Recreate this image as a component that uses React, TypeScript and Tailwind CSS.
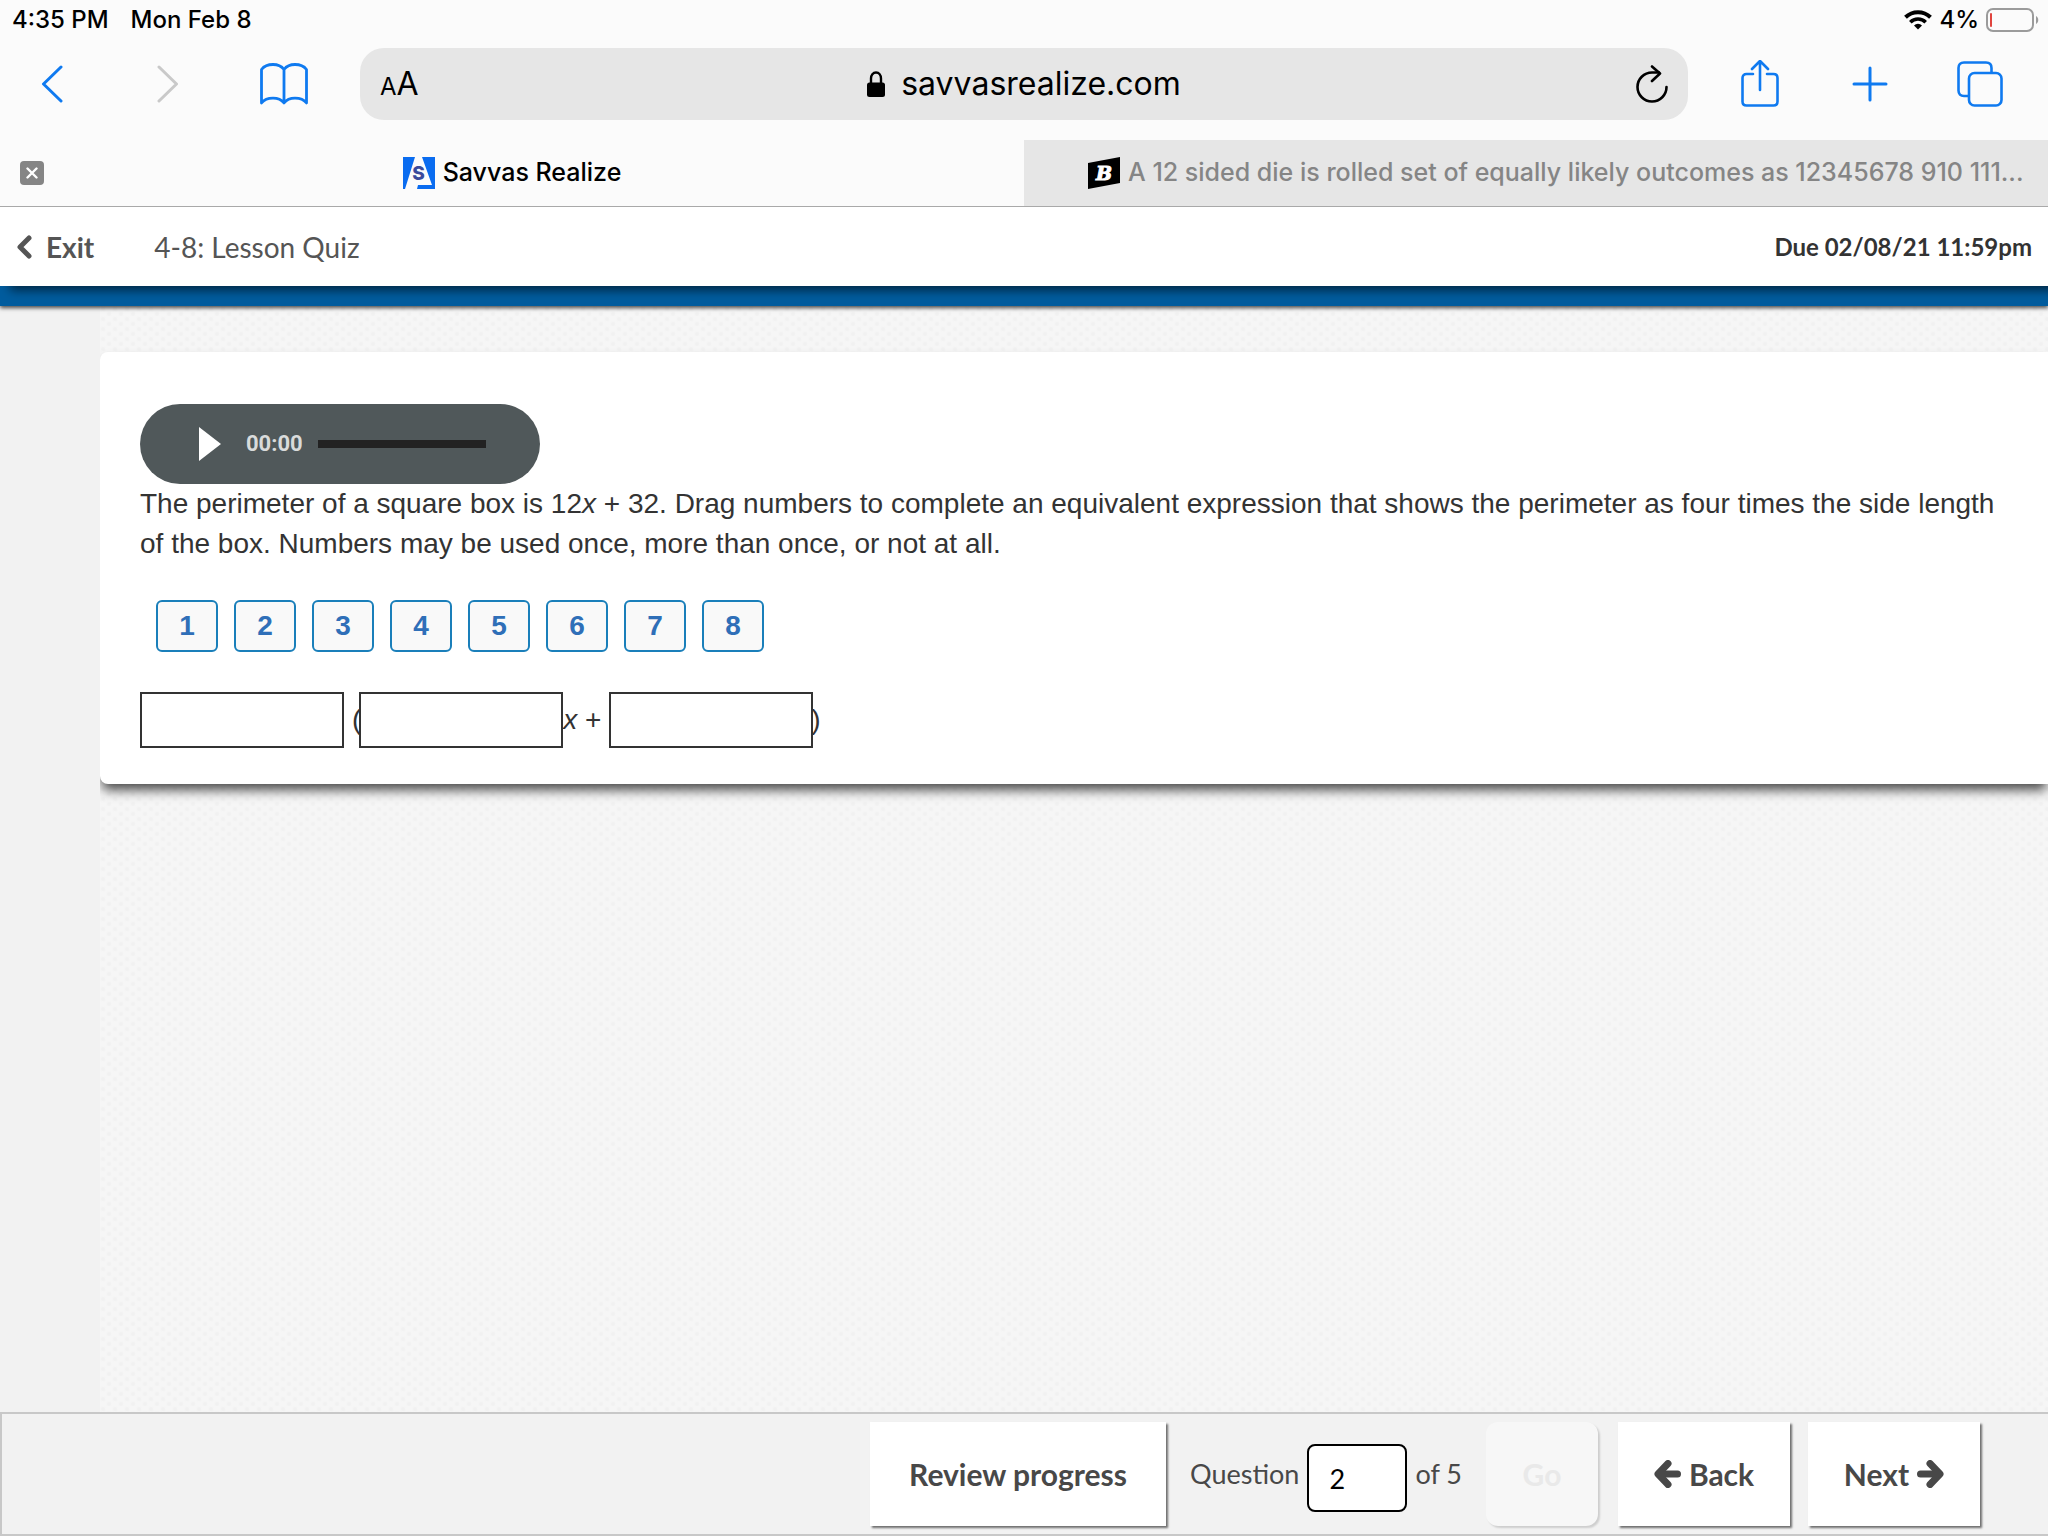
import { useState } from "react";
import type { ReactNode } from "react";

const NUMBERS = ["1", "2", "3", "4", "5", "6", "7", "8"];
const TOTAL_QUESTIONS = 5;

const WifiIcon = () => (
  <svg width="28" height="20" viewBox="0 0 28 20" fill="none" stroke="#000" aria-hidden="true">
    <path d="M1.5 7.2a18 18 0 0 1 25 0" strokeWidth="4" />
    <path d="M6.3 12.2a11 11 0 0 1 15.4 0" strokeWidth="3.6" />
    <path d="M14 19.6l-4-4.2a5.7 5.7 0 0 1 8 0z" fill="#000" stroke="none" />
  </svg>
);

const BatteryIcon = () => (
  <svg width="54" height="24" viewBox="0 0 54 24" fill="none" aria-hidden="true">
    <rect x="1" y="1" width="46" height="22" rx="6" stroke="#9b9b9b" strokeWidth="2" />
    <path d="M50 8c3 1.400 3 6.600 0 8z" fill="#9b9b9b" />
    <rect x="4" y="5" width="2" height="14" rx="1" fill="#e0443e" />
  </svg>
);

const BackIcon = () => (
  <svg width="22" height="38" viewBox="0 0 22 38" fill="none" stroke="#0f7af0" strokeWidth="3" strokeLinecap="round" strokeLinejoin="round" aria-hidden="true">
    <path d="M20 2L2.500 19 20 36" />
  </svg>
);

const ForwardIcon = () => (
  <svg width="22" height="38" viewBox="0 0 22 38" fill="none" stroke="#c9c9c9" strokeWidth="3" strokeLinecap="round" strokeLinejoin="round" aria-hidden="true">
    <path d="M2 2l17.500 17L2 36" />
  </svg>
);

const BookIcon = () => (
  <svg width="48" height="42" viewBox="0 0 48 42" fill="none" stroke="#0f7af0" strokeWidth="2.800" strokeLinejoin="round" aria-hidden="true">
    <path d="M24 6.500C21.500 3.200 17.500 1.500 13 1.500S4 3.200 1.500 6.500V40c2.500-3.200 7-4.800 11.500-4.800S21.500 36.800 24 40c2.500-3.200 6.500-4.800 11-4.800s9 1.600 11.500 4.800V6.500C44 3.200 39.500 1.500 35 1.500S26.500 3.200 24 6.500zM24 6.500V40" />
  </svg>
);

const LockIcon = () => (
  <svg width="18" height="26" viewBox="0 0 18 26" aria-hidden="true">
    <path d="M4 13V7.500C4 4 6 1.500 9 1.500s5 2.500 5 6V13" fill="none" stroke="#000" strokeWidth="2.400" />
    <rect y="11.500" width="18" height="14.500" rx="2.500" />
  </svg>
);

const ReloadIcon = () => (
  <svg width="32" height="38" viewBox="0 0 32 38" fill="none" stroke="#000" strokeWidth="2.600" strokeLinecap="round" strokeLinejoin="round" aria-hidden="true">
    <path d="M30.500 22A14.500 14.500 0 1 1 16 7.500h7" />
    <path d="M16 1.500l8 7-8 7.500" />
  </svg>
);

const ShareIcon = () => (
  <svg width="38" height="48" viewBox="0 0 38 48" fill="none" stroke="#0f7af0" strokeWidth="2.600" strokeLinecap="round" strokeLinejoin="round" aria-hidden="true">
    <path d="M12 14H5.500C3 14 1.500 15.500 1.500 18v23.500c0 2.500 1.500 4 4 4h27c2.500 0 4-1.500 4-4V18c0-2.500-1.500-4-4-4H26" />
    <path d="M19 30V1.500M11 9l8-8 8 8" />
  </svg>
);

const PlusIcon = () => (
  <svg width="36" height="36" viewBox="0 0 36 36" stroke="#0f7af0" strokeWidth="3" strokeLinecap="round" aria-hidden="true">
    <path d="M18 2v32M2 18h32" />
  </svg>
);

const TabsIcon = () => (
  <svg width="46" height="46" viewBox="0 0 46 46" fill="none" stroke="#0f7af0" strokeWidth="2.600" aria-hidden="true">
    <path d="M12 35H7c-3.500 0-5.500-2-5.500-5.500V7C1.500 3.500 3.500 1.500 7 1.500h22c3.500 0 5.500 2 5.500 5.500v5" />
    <rect x="12" y="12" width="32.500" height="32.500" rx="5.500" />
  </svg>
);

const SavvasLogo = () => (
  <svg width="32" height="32" viewBox="0 0 32 32" aria-hidden="true">
    <path d="M0 0h12L2 32H0z" fill="#0a6cf0" />
    <path d="M19 0h13v32H14l1-4h14z" fill="#0a6cf0" />
    <text x="15.500" y="23" textAnchor="middle" fontFamily="Inter, sans-serif" fontSize="19" fontWeight="800" fill="#3a4a9c">S</text>
  </svg>
);

const BartlebyLogo = () => (
  <svg width="32" height="32" viewBox="0 0 32 32" aria-hidden="true">
    <path d="M0 6L32 0v26L0 32z" />
    <text x="16" y="23" textAnchor="middle" fontFamily="DejaVu Serif, serif" fontSize="19" fontWeight="700" fontStyle="italic" fill="#fff" stroke="#fff">B</text>
  </svg>
);

const ChevronIcon = () => (
  <svg width="16" height="24" viewBox="0 0 16 24" fill="none" stroke="#555" strokeWidth="5" strokeLinecap="round" strokeLinejoin="round" aria-hidden="true">
    <path d="M13 3L4 12l9 9" />
  </svg>
);

const ArrowIcon = ({ className = "" }: { className?: string }) => (
  <svg className={className} width="27" height="28" viewBox="0 0 27 28" fill="none" stroke="#484848" strokeLinecap="round" strokeLinejoin="round" aria-hidden="true">
    <path d="M14 3.500L4 14l10 10.500" strokeWidth="7" />
    <path d="M6 14h17.500" strokeWidth="7" />
  </svg>
);

const ToolButton = ({ label, children }: { label: string; children: ReactNode }) => (
  <button aria-label={label} className="flex w-12 items-center justify-center">
    {children}
  </button>
);

const DropBox = ({ label }: { label: string }) => {
  const [value, setValue] = useState("");

  return (
    <span
      role="group"
      aria-label={label}
      onDragOver={(e) => e.preventDefault()}
      onDrop={(e) => setValue(e.dataTransfer.getData("text"))}
      className="flex h-14 w-51 items-center justify-center border-2 border-[#333] bg-white"
    >
      {value}
    </span>
  );
};

const BrowserChrome = () => (
  <div className="relative z-20 border-b border-[#a9a9a9] bg-[#fbfbfb] font-['Inter',sans-serif] text-black">
    <div className="flex h-10 items-center justify-between pr-2 pl-3 text-2xl font-medium">
      <div className="flex gap-[22px]">
        <span>4:35 PM</span>
        <span>Mon Feb 8</span>
      </div>
      <div className="flex items-center gap-[7px]">
        <WifiIcon />
        <span>4%</span>
        <BatteryIcon />
      </div>
    </div>

    <div className="flex h-25 items-center pb-3">
      <div className="flex w-90 items-center justify-between pr-13 pl-7">
        <ToolButton label="Back"><BackIcon /></ToolButton>
        <ToolButton label="Forward"><ForwardIcon /></ToolButton>
        <ToolButton label="Bookmarks"><BookIcon /></ToolButton>
      </div>
      <div className="flex h-18 flex-1 items-center justify-between rounded-3xl bg-[#e6e6e6] px-5">
        <button aria-label="Page settings" className="w-10 text-left">
          <span className="text-2xl">A</span>
          <span className="text-[32px]">A</span>
        </button>
        <div className="flex items-center gap-4 text-[32px]">
          <LockIcon />
          <span>savvasrealize.com</span>
        </div>
        <button aria-label="Reload" className="flex w-10 justify-end"><ReloadIcon /></button>
      </div>
      <div className="flex w-90 items-center justify-between pr-11 pl-12">
        <ToolButton label="Share"><ShareIcon /></ToolButton>
        <ToolButton label="New tab"><PlusIcon /></ToolButton>
        <ToolButton label="Tabs"><TabsIcon /></ToolButton>
      </div>
    </div>

    <div className="grid h-[66px] grid-cols-2 text-[25px] font-medium">
      <div className="flex items-center px-5">
        <button aria-label="Close tab" className="flex size-6 items-center justify-center rounded-sm bg-[#858585]">
          <svg width="12" height="12" viewBox="0 0 12 12" stroke="#fff" strokeWidth="2.400" strokeLinecap="round" aria-hidden="true">
            <path d="M1.500 1.500l9 9M10.500 1.500l-9 9" />
          </svg>
        </button>
        <a href="#savvas" className="flex flex-1 items-center justify-center gap-2 pr-6">
          <SavvasLogo />
          Savvas Realize
        </a>
      </div>
      <a href="#die" className="flex min-w-0 items-center gap-2 bg-[#e6e6e6] pl-16 text-[#858585]">
        <span className="shrink-0"><BartlebyLogo /></span>
        <span className="truncate">A 12 sided die is rolled set of equally likely outcomes as 12345678 910 111...</span>
      </a>
    </div>
  </div>
);

const AudioPlayer = () => (
  <div className="flex h-20 w-100 items-center rounded-[40px] bg-[#50585a] pl-14">
    <button aria-label="Play">
      <svg width="28" height="36" viewBox="0 0 28 36" aria-hidden="true">
        <path d="M3 1l22 17L3 35z" fill="#fff" />
      </svg>
    </button>
    <span className="ml-[22px] w-14 font-['Roboto',sans-serif] text-[22px] font-bold text-[#d9dbdb]">00:00</span>
    <input
      type="range"
      aria-label="Audio position"
      defaultValue={0}
      className="ml-4 h-2 w-42 appearance-none bg-[#222] [&::-webkit-slider-thumb]:w-0 [&::-webkit-slider-thumb]:appearance-none"
    />
  </div>
);

const App = () => {
  const [question, setQuestion] = useState("2");

  const step = (by: number) => {
    const next = Math.min(TOTAL_QUESTIONS, Math.max(1, Number(question) + by));
    setQuestion(String(next));
  };

  return (
    <div className="flex min-h-screen flex-col bg-[#f2f2f2] text-[#333]">
      <BrowserChrome />

      <header className="relative z-10 flex h-[79px] items-center bg-white px-4 font-['Lato',sans-serif] shadow-[10px_4px_10px_rgba(0,0,0,0.6)]">
        <a href="#exit" className="flex items-center gap-3.5 text-[28px] font-bold text-[#555]">
          <ChevronIcon />
          Exit
        </a>
        <h1 className="ml-15 text-[28px] text-[#555]">4-8: Lesson Quiz</h1>
        <p className="ml-auto text-2xl font-bold">Due 02/08/21 11:59pm</p>
      </header>
      <div className="relative h-5 bg-[#005c9e] shadow-[0_2px_4px_rgba(0,0,0,0.7)]" />

      <main className="ml-25 flex-1 overflow-hidden bg-[#f6f6f6] bg-[radial-gradient(circle_at_3px_3px,#f1f1f1_1px,transparent_3px),radial-gradient(circle_at_9px_8px,#f1f1f1_1px,transparent_3px)] bg-[length:12px_10px] pt-[46px] font-['Liberation_Sans',sans-serif] text-[28px] leading-10">
        <section className="rounded-l-lg bg-white px-10 pt-[52px] pb-9 shadow-[0_8px_12px_-2px_rgba(0,0,0,0.7)]">
          <AudioPlayer />
          <p>
            The perimeter of a square box is 12<i>x</i> + 32. Drag numbers to complete an equivalent expression that
            shows the perimeter as four times the side length of the box. Numbers may be used once, more than once, or
            not at all.
          </p>

          <div className="mt-9 flex gap-4 pl-4">
            {NUMBERS.map((n) => (
              <button
                key={n}
                draggable
                onDragStart={(e) => e.dataTransfer.setData("text", n)}
                className="h-13 w-[62px] rounded-md border-2 border-[#1a7fba] bg-[#f9f9f9] font-bold text-[#2f6fb8]"
              >
                {n}
              </button>
            ))}
          </div>

          <div className="mt-10 flex items-center">
            <DropBox label="Multiplier" />
            <span className="-mr-0.5 ml-2">(</span>
            <DropBox label="Coefficient of x" />
            <span className="whitespace-pre"><i>x</i> + </span>
            <DropBox label="Constant" />
            <span className="-ml-0.5">)</span>
          </div>
        </section>
      </main>

      <footer className="flex h-31 items-center justify-end border-y-2 border-l-2 border-[#c8c8c8] bg-[#f2f2f2] pr-17 font-['Lato',sans-serif] text-[30px] font-bold text-[#484848]">
        <button className="h-26 w-74 bg-white shadow-[2px_2px_2px_rgba(0,0,0,0.55)]">Review progress</button>
        <label htmlFor="question" className="ml-6 text-[27px] font-normal">Question</label>
        <input
          id="question"
          value={question}
          onChange={(e) => setQuestion(e.target.value)}
          className="mx-2 mt-2 h-17 w-25 rounded-lg border-2 border-black bg-white px-5 text-[27px] font-normal text-black"
        />
        <span className="text-[27px] font-normal">of {TOTAL_QUESTIONS}</span>
        <button disabled className="ml-6 h-26 w-28 rounded-xl bg-[#f7f7f7] text-[#e9e9e9] shadow-[2px_2px_2px_rgba(0,0,0,0.15)]">
          Go
        </button>
        <button
          onClick={() => step(-1)}
          className="ml-5 flex h-26 w-43 items-center justify-center gap-2 bg-white shadow-[2px_2px_2px_rgba(0,0,0,0.55)]"
        >
          <ArrowIcon />
          Back
        </button>
        <button
          onClick={() => step(1)}
          className="ml-[18px] flex h-26 w-43 items-center justify-center gap-2 bg-white shadow-[2px_2px_2px_rgba(0,0,0,0.55)]"
        >
          Next
          <ArrowIcon className="rotate-180" />
        </button>
      </footer>
    </div>
  );
};

export default App;
